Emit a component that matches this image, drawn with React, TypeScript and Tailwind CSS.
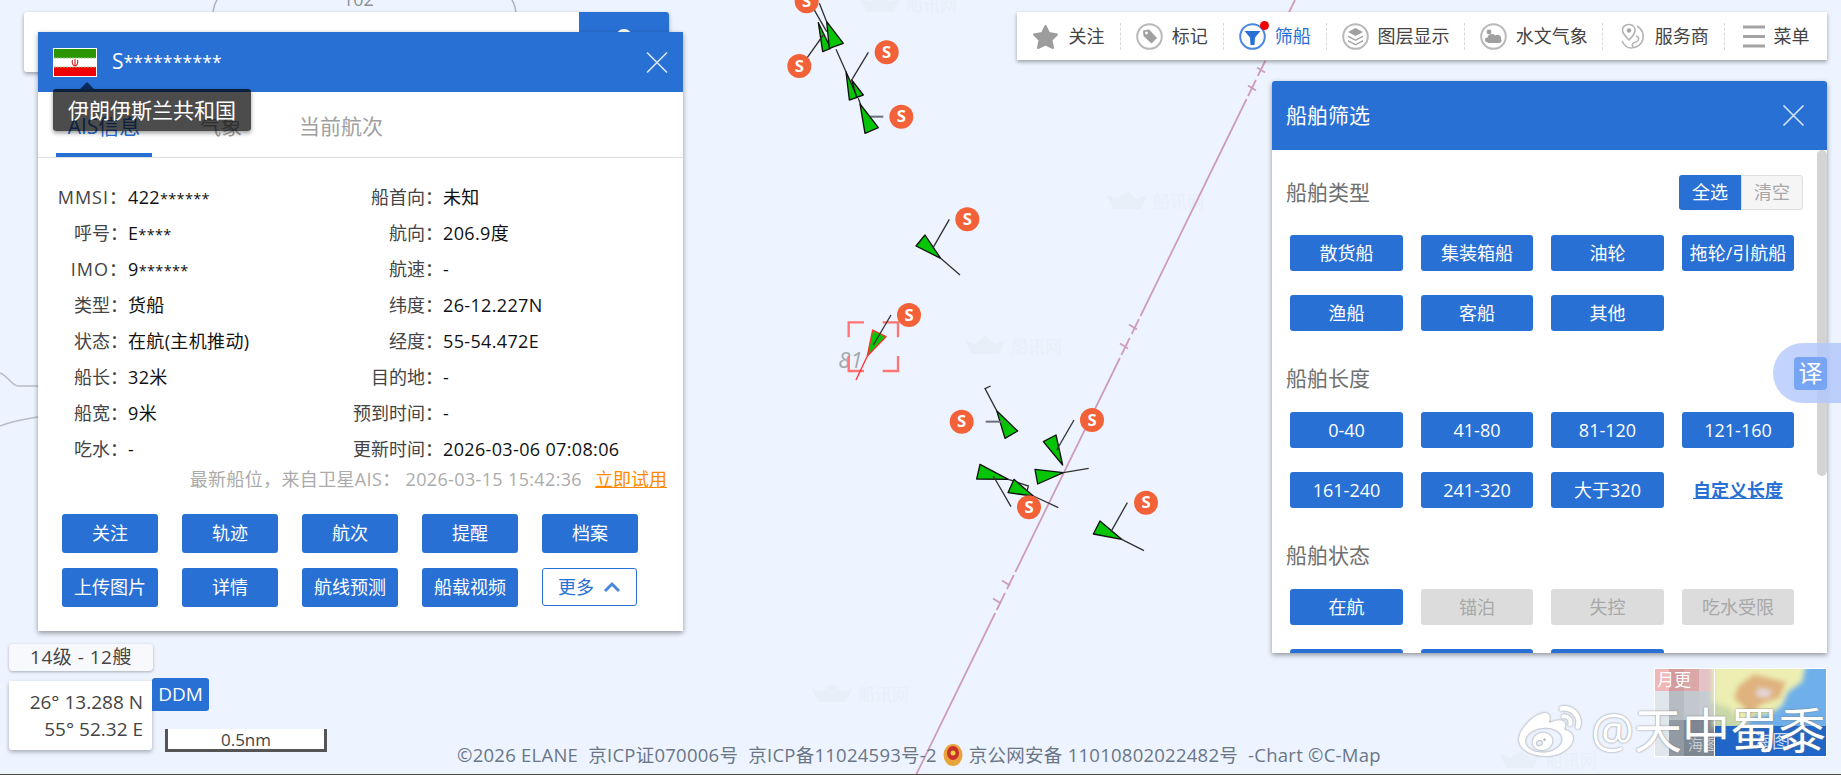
import React from "react"
import { FaWeibo } from "react-icons/fa"

const font = "font-['Open_Sans','Noto_Sans_CJK_SC',sans-serif]"

function SMark({ x, y }: { x: number; y: number }) {
    return (
        <g>
            <circle cx={x} cy={y} r={36} fill="#f26138" />
            <text x={x} y={y + 17} textAnchor="middle" fontSize={50} fontWeight={700} fill="#fff" fontFamily="'Open Sans', sans-serif">S</text>
        </g>
    )
}

function Ship({ points, red }: { points: string; red?: boolean }) {
    return <polygon points={points} fill="#06c406" stroke={red ? "#ff3030" : "#111"} strokeWidth={4} strokeLinejoin="round" />
}

function Stroke({ d, color = "#333", width = 4 }: { d: string; color?: string; width?: number }) {
    return <path d={d} fill="none" stroke={color} strokeWidth={width} />
}

function Watermark({ x, y }: { x: number; y: number }) {
    const c = "#e8eff9"
    return (
        <g transform={`translate(${x} ${y})`}>
            <path d="M0 4 L10 8 L20 0 L30 8 L40 4 L34 18 L6 18 Z" fill={c} />
            <text x={46} y={17} fontSize={17} fill={c} fontFamily="'Noto Sans CJK SC', sans-serif">船讯网</text>
        </g>
    )
}

function MapLayer() {
    return (
        <svg className="absolute inset-0" width={1841} height={775} viewBox="0 0 1841 775">
            {/* coast and depth contours */}
            <path d="M213 12 C214 6 215 3 217 0 M516 12 C515 6 514 3 512 0" fill="none" stroke="#aeb4bd" strokeWidth={1.5} />
            <text x={343} y={6} fontSize={18} fill="#8b9097" fontFamily="'Open Sans', sans-serif">102</text>
            <path d="M0 373 C8 376 12 386 18 386 L38 386" fill="none" stroke="#b8bcc4" strokeWidth={1.5} />
            <path d="M0 426 C12 421 26 419 38 417" fill="none" stroke="#b8bcc4" strokeWidth={1.5} />

            <Watermark x={860} y={-6} />
            <Watermark x={1107} y={191} />
            <Watermark x={965} y={336} />
            <Watermark x={812} y={684} />
            <Watermark x={1500} y={750} />

            {/* shipping route */}
            <g stroke="#cf9dbc" strokeWidth={1.8} fill="none">
                <path d="M1295 0 L1266.6 58 M1265.2 61 L1257.8 76 M1255.9 80 L1248.1 96 M1246.6 99 L1140.5 316 M1139 319 L1131.7 334 M1129.7 338 L1121.4 355 M1119.9 358 L1015.3 572 M1013.8 575 L1007 589 M1005 593 L996.7 610 M995.2 613 L916 775" />
                <path d="M1257 67.5 L1265 72.5 M1248 85.5 L1256 90.5 M1129 324.5 L1137 329.5 M1120 343.5 L1128 348.5 M1002 580.5 L1010 585.5 M993 598.5 L1001 603.5" />
            </g>

            {/* ships, drawn at 3x of the page */}
            <g transform="translate(760 0) scale(0.33333)">
                <Stroke d="M160 25 L200 95 M178 10 L200 65 M138 178 L190 105 M228 148 L258 215 M325 157 L278 235 M295 295 L302 314" />
                <Stroke d="M330 350 L370 350" color="#6b7078" width={6} />
                <Ship points="175,68 188,155 212,145" />
                <Ship points="200,65 208,145 250,130" />
                <Ship points="258,215 268,300 292,292" />
                <Ship points="275,240 290,292 310,285" />
                <Ship points="300,312 315,400 355,383" />
                <Stroke d="M190 105 L180 118 M278 235 L272 245" />
                <SMark x={140} y={4} />
                <SMark x={118} y={198} />
                <SMark x={380} y={157} />
                <SMark x={424} y={350} />
            </g>
            <g transform="translate(830 190) scale(0.33333)">
                <Ship points="332,205 258,168 285,135" />
                <Stroke d="M358 88 L308 175 M332 205 L390 255" />
                <SMark x={412} y={88} />
                <text x={25} y={535} fontSize={66} fontStyle="italic" fill="#a3a8ae" fontFamily="'Open Sans', sans-serif">81</text>
                <path d="M56 442 L56 397 L102 397 M204 442 L204 397 L158 397 M56 498 L56 543 L102 543 M204 498 L204 543 L158 543" fill="none" stroke="#ff7474" strokeWidth={7} />
                <Ship points="112,498 128,420 168,440" red />
                <Stroke d="M112 498 L78 570" color="#ff3030" />
                <Stroke d="M183 375 L130 465" />
                <SMark x={237} y={375} />
            </g>
            <g transform="translate(930 380) scale(0.33333)">
                <Stroke d="M182 18 L165 26 L200 92" />
                <Ship points="200,92 225,175 263,153" />
                <Stroke d="M167 125 L218 125" color="#6b7078" width={6} />
                <Ship points="398,255 340,185 378,165" />
                <Stroke d="M432 120 L380 210" />
                <Ship points="400,278 315,268 323,312" />
                <Stroke d="M400 278 L476 265" />
                <Ship points="235,298 150,253 140,297" />
                <Stroke d="M235 298 L295 318 L292 330 M190 288 L243 380" />
                <Ship points="310,348 252,298 234,338" />
                <Stroke d="M310 348 L385 383" />
                <Ship points="575,478 510,423 490,462" />
                <Stroke d="M575 478 L642 512 M592 368 L543 455" />
                <SMark x={95} y={125} />
                <SMark x={486} y={120} />
                <SMark x={297} y={382} />
                <SMark x={648} y={368} />
            </g>
        </svg>
    )
}

const circleIcon = "w-[27px] h-[27px] shrink-0"

function IconStar() {
    return (
        <svg className={circleIcon} viewBox="0 0 27 27">
            <path d="M13.5 3 L17 10 L25 11.5 L19.5 17 L21 25 L13.5 21.5 L6 25 L7.5 17 L2 11.5 L10 10 Z" fill="#9c9c9c" stroke="#9c9c9c" strokeWidth={2} strokeLinejoin="round" />
        </svg>
    )
}

function IconTag() {
    return (
        <svg className={circleIcon} viewBox="0 0 27 27">
            <circle cx={13.5} cy={13.5} r={12.3} fill="none" stroke="#b9b9b9" strokeWidth={2} />
            <path d="M7 7.5 L13 6.5 L21 15 L15.5 20.5 L7.5 13 Z" fill="#a0a0a0" strokeLinejoin="round" />
            <circle cx={10.5} cy={10} r={1.4} fill="#fff" />
        </svg>
    )
}

function IconFilter() {
    return (
        <span className="relative shrink-0">
            <svg className={circleIcon + " block"} viewBox="0 0 27 27">
                <circle cx={13.5} cy={13.5} r={12.3} fill="none" stroke="#4b88dd" strokeWidth={2} />
                <path d="M5.5 8 H21.5 L16 14.5 L15.5 22 L11.5 22 L11 14.5 Z" fill="#2970d5" />
            </svg>
            <span className="absolute right-[-3px] top-[-2px] h-[9px] w-[9px] rounded-full bg-[#f00000]" />
        </span>
    )
}

function IconLayers() {
    return (
        <svg className={circleIcon} viewBox="0 0 27 27">
            <circle cx={13.5} cy={13.5} r={12.3} fill="none" stroke="#b9b9b9" strokeWidth={2} />
            <path d="M13.5 5 L21 9 L13.5 13 L6 9 Z M6 12.5 L13.5 16.5 L21 12.5 L21 14 L13.5 18 L6 14 Z M6 17 L13.5 21 L21 17 L21 18.5 L13.5 22.5 L6 18.5 Z" fill="#a0a0a0" />
        </svg>
    )
}

function IconCloud() {
    return (
        <svg className={circleIcon} viewBox="0 0 27 27">
            <circle cx={13.5} cy={13.5} r={12.3} fill="none" stroke="#b9b9b9" strokeWidth={2} />
            <circle cx={9} cy={9} r={2.4} fill="#a0a0a0" />
            <path d="M7 19 C4 19 4 14.5 7.5 14.5 C8 11 13 10 15 12.5 C18 10.5 22 13 21 16 C22.5 18 21 20 19 20 L8 20 Z" fill="#a0a0a0" />
        </svg>
    )
}

function IconMapPin() {
    return (
        <svg className={circleIcon} viewBox="0 0 27 27">
            <path d="M10 1.5 C5 1.5 3 5 3.5 8 C4 11 8 15 10 17 C12 15 15.5 11 16 8 C16.5 5 14.5 1.5 10 1.5 Z" fill="none" stroke="#b5b5b5" strokeWidth={1.6} />
            <circle cx={10} cy={7.5} r={2.2} fill="#a5a5a5" />
            <path d="M18 3 C23 6 25 11 24 16 C23 21 18 25 12 25 C8 25 5 22 3 18 M17 13 C21 14 20 18 17 19 C14 20 12 21 14 24" fill="none" stroke="#b5b5b5" strokeWidth={1.6} />
        </svg>
    )
}

function IconMenu() {
    return (
        <svg className="h-[27px] w-[22px] shrink-0" viewBox="0 0 22 27">
            <path d="M0 4 H22 M0 13.5 H22 M0 23 H22" stroke="#a3a3a3" strokeWidth={3.2} />
        </svg>
    )
}

function Sep() {
    return <div className="h-[27px] w-0 border-l border-dashed border-[#d9d9d9]" />
}

function ToolItem({ icon, label, width, active }: { icon: React.ReactNode; label: string; width: string; active?: boolean }) {
    return (
        <div className={`flex h-full items-center justify-center gap-[9px] text-[18px] ${width} ${active ? "text-[#2970d5]" : "text-[#444]"}`}>
            {icon}
            <span>{label}</span>
        </div>
    )
}

function Toolbar() {
    return (
        <div className="absolute left-[1017px] top-[12px] flex h-[48px] w-[810px] items-center bg-white shadow-[0_2px_4px_rgba(0,0,0,0.35)]">
            <ToolItem icon={<IconStar />} label="关注" width="w-[103px]" />
            <Sep />
            <ToolItem icon={<IconTag />} label="标记" width="w-[102px]" />
            <Sep />
            <ToolItem icon={<IconFilter />} label="筛船" width="w-[102px]" active />
            <Sep />
            <ToolItem icon={<IconLayers />} label="图层显示" width="w-[138px]" />
            <Sep />
            <ToolItem icon={<IconCloud />} label="水文气象" width="w-[137px]" />
            <Sep />
            <ToolItem icon={<IconMapPin />} label="服务商" width="w-[121px]" />
            <Sep />
            <ToolItem icon={<IconMenu />} label="菜单" width="w-[102px]" />
        </div>
    )
}

function Flag() {
    return (
        <svg className="h-[29px] w-[44px] shrink-0" viewBox="0 0 44 29">
            <rect width={44} height={29} fill="#fff" />
            <rect x={1} y={1} width={42} height={9} fill="#2b9500" />
            <rect x={1} y={19} width={42} height={9} fill="#f00000" />
            <path d="M1 10 H43 M1 19 H43" stroke="#9ccb88" strokeWidth={1} strokeDasharray="2 1" />
            <path d="M22 11 V18 M19.5 12 C18.5 15 20 17.5 22 18 C24 17.5 25.5 15 24.5 12" fill="none" stroke="#d43030" strokeWidth={1.2} />
        </svg>
    )
}

function CloseX({ className }: { className: string }) {
    return (
        <svg className={className} viewBox="0 0 22 21">
            <path d="M1 0.5 L21 20.5 M21 0.5 L1 20.5" stroke="#d5e3f8" strokeWidth={1.6} />
        </svg>
    )
}

// the asterisks of a masked value sit smaller than the digits
function Masked({ text }: { text: string }) {
    const i = text.indexOf("*")
    if (i < 0) return <>{text}</>
    return (
        <>
            {text.slice(0, i)}
            <span className="text-[14.5px] leading-none">{text.slice(i)}</span>
        </>
    )
}

const infoRows = [
    ["MMSI：", "422******", "船首向：", "未知"],
    ["呼号：", "E****", "航向：", "206.9度"],
    ["IMO：", "9******", "航速：", "-"],
    ["类型：", "货船", "纬度：", "26-12.227N"],
    ["状态：", "在航(主机推动)", "经度：", "55-54.472E"],
    ["船长：", "32米", "目的地：", "-"],
    ["船宽：", "9米", "预到时间：", "-"],
    ["吃水：", "-", "更新时间：", "2026-03-06 07:08:06"],
]

const actionsTop = ["关注", "轨迹", "航次", "提醒", "档案"]
const actionsBottom = ["上传图片", "详情", "航线预测", "船载视频"]

function ActionButton({ label }: { label: string }) {
    return (
        <button className="h-[39px] rounded-[3px] bg-[#2970d5] text-[18px] text-white">{label}</button>
    )
}

function ShipPanel() {
    return (
        <div className="absolute left-[38px] top-[32px] w-[645px] bg-white shadow-[0_2px_5px_rgba(0,0,0,0.4)]">
            <div className="flex h-[60px] items-center bg-[#2970d5] pl-[15px] pr-[15px] text-white">
                <Flag />
                <span className="ml-[15px] text-[21px]">S<span className="text-[17.5px] tracking-[0.2px]">**********</span></span>
                <CloseX className="ml-auto h-[21px] w-[22px]" />
            </div>

            <div className="relative flex h-[66px] border-b border-[#dedede] pl-[18px] text-[21px] leading-[28px] text-[#a0a0a0]">
                <div className="flex h-[65px] w-[96px] flex-col items-center pt-[20px] text-[#2970d5]">
                    <span>AIS信息</span>
                    <span className="mt-auto h-[4px] w-full bg-[#2970d5]" />
                </div>
                <span className="ml-[48px] pt-[20px]">气象</span>
                <span className="ml-[57px] pt-[20px]">当前航次</span>

                {/* country tooltip */}
                <div className="absolute left-[15px] top-[-3px] flex h-[42px] w-[198px] items-center justify-center rounded-[3px] bg-black/70 text-[21px] text-white shadow-[0_2px_4px_rgba(0,0,0,0.4)]">
                    伊朗伊斯兰共和国
                    <span className="absolute left-[27px] top-[-7px] h-0 w-0 border-x-[7px] border-b-[7px] border-x-transparent border-b-[#0b2a5c]" />
                </div>
            </div>

            <div className="grid grid-cols-[90px_225px_90px_1fr] auto-rows-[36px] pt-[21px] text-[18px] leading-[36px]">
                {infoRows.map((row) => (
                    <React.Fragment key={row[0]}>
                        <div className={`flex justify-end whitespace-nowrap text-[#444] ${/[A-Z]/.test(row[0]) ? "tracking-[1px]" : ""}`}>
                            {row[0]}
                        </div>
                        <div className="tracking-[0.35px] text-[#111]"><Masked text={row[1]} /></div>
                        <div className="flex justify-end whitespace-nowrap text-[#444]">{row[2]}</div>
                        <div className="whitespace-nowrap tracking-[0.35px] text-[#111]">{row[3]}</div>
                    </React.Fragment>
                ))}
            </div>

            <div className="whitespace-nowrap pr-[16px] text-right text-[18px] leading-[24px] tracking-[0.35px] text-[#ababab]">
                最新船位，来自卫星AIS： 2026-03-15 15:42:36
                <span className="ml-[13px] tracking-normal text-[#ff8a00] underline">立即试用</span>
            </div>

            <div className="mt-[23px] grid grid-cols-[repeat(5,96px)] gap-x-[24px] gap-y-[15px] pb-[24px] pl-[24px]">
                {actionsTop.map((a) => <ActionButton key={a} label={a} />)}
                {actionsBottom.map((a) => <ActionButton key={a} label={a} />)}
                <div className="flex h-[38px] w-[95px] items-center justify-center gap-[9px] rounded-[3px] border border-[#2970d5] text-[18px] text-[#2970d5]">
                    更多
                    <svg className="h-[12px] w-[18px]" viewBox="0 0 18 12">
                        <path d="M2 10 L9 3 L16 10" fill="none" stroke="#4b88dd" strokeWidth={3} />
                    </svg>
                </div>
            </div>
        </div>
    )
}

function FilterButton({ label, off }: { label?: string; off?: boolean }) {
    return (
        <button className={`h-[36px] rounded-[3px] text-[18px] ${off ? "bg-[#dcdcdc] text-[#a8a8a8]" : "bg-[#2970d5] text-white"}`}>{label}</button>
    )
}

const filterGrid = "grid grid-cols-[113px_112px_113px_112px] gap-x-[18px] gap-y-[24px] pl-[18px]"

function FilterPanel() {
    return (
        <div className="absolute left-[1272px] top-[81px] flex h-[572px] w-[555px] flex-col rounded-t-[3px] bg-white shadow-[0_2px_5px_rgba(0,0,0,0.4)]">
            <div className="flex h-[69px] shrink-0 items-center justify-between rounded-t-[3px] bg-[#2970d5] pl-[14px] pr-[22px] text-[21px] text-white">
                船舶筛选
                <CloseX className="h-[21px] w-[23px]" />
            </div>
            <div className="relative flex-1 overflow-hidden">
                <div className="absolute right-0 top-0 h-[326px] w-[10px] rounded-[5px] bg-[#d4d4d4]" />

                <div className="mb-[25px] mt-[25px] flex h-[35px] items-center justify-between pl-[14px] pr-[24px] text-[21px] text-[#707070]">
                    船舶类型
                    <div className="flex text-[18px]">
                        <span className="flex h-[35px] w-[62px] items-center justify-center rounded-l-[3px] bg-[#2970d5] text-white">全选</span>
                        <span className="flex h-[35px] w-[62px] items-center justify-center rounded-r-[3px] border border-[#dedede] bg-[#f5f5f5] text-[#a8a8a8]">清空</span>
                    </div>
                </div>
                <div className={filterGrid}>
                    {["散货船", "集装箱船", "油轮", "拖轮/引航船", "渔船", "客船", "其他"].map((t) => <FilterButton key={t} label={t} />)}
                </div>

                <div className="mb-[15px] mt-[30px] flex h-[36px] items-center pl-[14px] text-[21px] text-[#707070]">船舶长度</div>
                <div className={filterGrid}>
                    {["0-40", "41-80", "81-120", "121-160", "161-240", "241-320", "大于320"].map((t) => <FilterButton key={t} label={t} />)}
                    <span className="flex items-center justify-center text-[18px] font-bold text-[#2970d5] underline">自定义长度</span>
                </div>

                <div className="mb-[15px] mt-[30px] flex h-[36px] items-center pl-[14px] text-[21px] text-[#707070]">船舶状态</div>
                <div className={filterGrid}>
                    <FilterButton label="在航" />
                    <FilterButton label="锚泊" off />
                    <FilterButton label="失控" off />
                    <FilterButton label="吃水受限" off />
                    <FilterButton />
                    <FilterButton />
                    <FilterButton />
                </div>
            </div>
        </div>
    )
}

function Thumbnail() {
    return (
        <svg className="absolute left-[1654px] top-[668px]" width={173} height={89} viewBox="0 0 173 89">
            <defs>
                <filter id="soft"><feGaussianBlur stdDeviation="2.5" /></filter>
            </defs>
            <rect width={60} height={89} fill="#dfe6ec" />
            <rect x={15} width={15} height={89} fill="#b6bcc2" />
            <rect x={30} width={15} height={89} fill="#c2c8cd" />
            <rect x={45} width={15} height={89} fill="#c6ccd1" />
            <rect y={52} x={15} width={15} height={37} fill="#929aa4" />
            <rect y={52} x={30} width={15} height={37} fill="#7d8794" />
            <rect y={52} x={45} width={15} height={37} fill="#7f8894" />
            <rect y={0} width={15} height={23} fill="#f0b7b9" />
            <rect y={0} x={15} width={15} height={23} fill="#d49a9c" />
            <rect y={0} x={30} width={15} height={23} fill="#dba8aa" />
            <rect y={0} x={45} width={15} height={23} fill="#e3c3c6" />
            <text x={3} y={18} fontSize={17} fill="#fff" fontFamily="'Noto Sans CJK SC', sans-serif">月更</text>
            <text x={34} y={82} fontSize={15} fill="#c7ccd2" fontFamily="'Noto Sans CJK SC', sans-serif">海图</text>
            <rect x={60} width={113} height={89} fill="#6fb0ea" />
            <g filter="url(#soft)">
                <path d="M58 -4 H152 L148 14 L134 24 L128 38 L116 46 L100 48 L88 60 L58 60 Z" fill="#eceeb2" />
                <path d="M100 6 L132 14 L126 30 L108 36 L96 46 L80 30 L84 18 Z" fill="#dfb27e" />
                <path d="M104 20 L118 22 L114 30 L102 28 Z" fill="#e4d8dc" />
                <path d="M58 34 L76 40 L88 60 L58 60 Z" fill="#c9d8a8" />
            </g>
            <rect x={60} y={58} width={113} height={31} fill="#1f66c8" />
            <text x={118} y={80} textAnchor="middle" fontSize={18} fill="#cfe0f8" fontFamily="'Noto Sans CJK SC', sans-serif">海图</text>
            <rect x={0.5} y={0.5} width={172} height={88} fill="none" stroke="#fff" />
            <path d="M60.5 0 V89" stroke="#fff" />
        </svg>
    )
}

export default function App() {
    return (
        <div className={`relative h-[775px] w-[1841px] overflow-hidden border-b border-[#4a4a3a] bg-[#edf4ff] ${font}`}>
            <MapLayer />

            {/* search box behind the ship panel */}
            <div className="absolute left-[24px] top-[12px] flex h-[60px] w-[645px] justify-end rounded-[3px] bg-white shadow-[0_2px_4px_rgba(0,0,0,0.35)]">
                <div className="flex w-[90px] justify-center rounded-r-[3px] bg-[#2970d5]">
                    <span className="mt-[17px] h-[16px] w-[16px] rounded-full border-[3px] border-white" />
                </div>
            </div>

            <ShipPanel />
            <Toolbar />
            <FilterPanel />

            <div className="absolute left-[9px] top-[644px] flex h-[27px] w-[144px] items-center justify-center rounded-[4px] bg-[#f8f9fd] text-[19px] tracking-[0.5px] text-[#444] shadow-[0_1px_3px_rgba(0,0,0,0.3)]">
                14级 - 12艘
            </div>
            <div className="absolute left-[9px] top-[681px] flex h-[69px] w-[143px] flex-col justify-center rounded-b-[3px] bg-white pr-[9px] text-right text-[19px] leading-[27px] text-[#444] shadow-[0_2px_4px_rgba(0,0,0,0.3)]">
                <div>26° 13.288 N</div>
                <div>55° 52.32 E</div>
            </div>
            <div className="absolute left-[152px] top-[678px] flex h-[33px] w-[57px] items-center justify-center rounded-r-[3px] rounded-tl-[3px] bg-[#2970d5] text-[19px] text-white">DDM</div>
            <div className="absolute left-[165px] top-[729px] flex h-[23px] w-[162px] items-center justify-center border-x-[3px] border-b-[3px] border-[#555] bg-white text-[17px] leading-none text-[#444]">0.5nm</div>

            <div className="absolute left-[457px] top-[742px] flex h-[26px] items-center whitespace-pre text-[18.5px] tracking-[0.25px] text-[#6a7686]">
                <span>©2026 ELANE  京ICP证070006号  京ICP备11024593号-2</span>
                <svg className="mx-[6px] h-[24px] w-[20px]" viewBox="0 0 20 24">
                    <ellipse cx={10} cy={12} rx={9.5} ry={11} fill="#e8a33a" />
                    <ellipse cx={10} cy={10} rx={6} ry={7} fill="#c9302c" />
                    <circle cx={10} cy={10} r={2.5} fill="#f3d04a" />
                </svg>
                <span>京公网安备 11010802022482号  -Chart ©C-Map</span>
            </div>

            <Thumbnail />

            {/* weibo repost mark */}
            <FaWeibo className="absolute left-[1519px] top-[702px] text-white [filter:drop-shadow(0_0_1px_#888)]" size={62} />
            <div className="absolute left-[1591px] top-[696px] whitespace-nowrap text-[48px] leading-[68px] text-white [text-shadow:0_0_2px_#777]">
                @天中蜀黍
            </div>

            {/* floating translate tab */}
            <div className="absolute left-[1773px] top-[343px] flex h-[60px] w-[68px] items-center rounded-l-[30px] bg-gradient-to-r from-[#bccffc]/90 to-[#aec4fb]/80 pl-[21px]">
                <span className="flex h-[33px] w-[33px] items-center justify-center rounded-[4px] bg-[#77a4f3] text-[24px] text-white">译</span>
            </div>
        </div>
    )
}
